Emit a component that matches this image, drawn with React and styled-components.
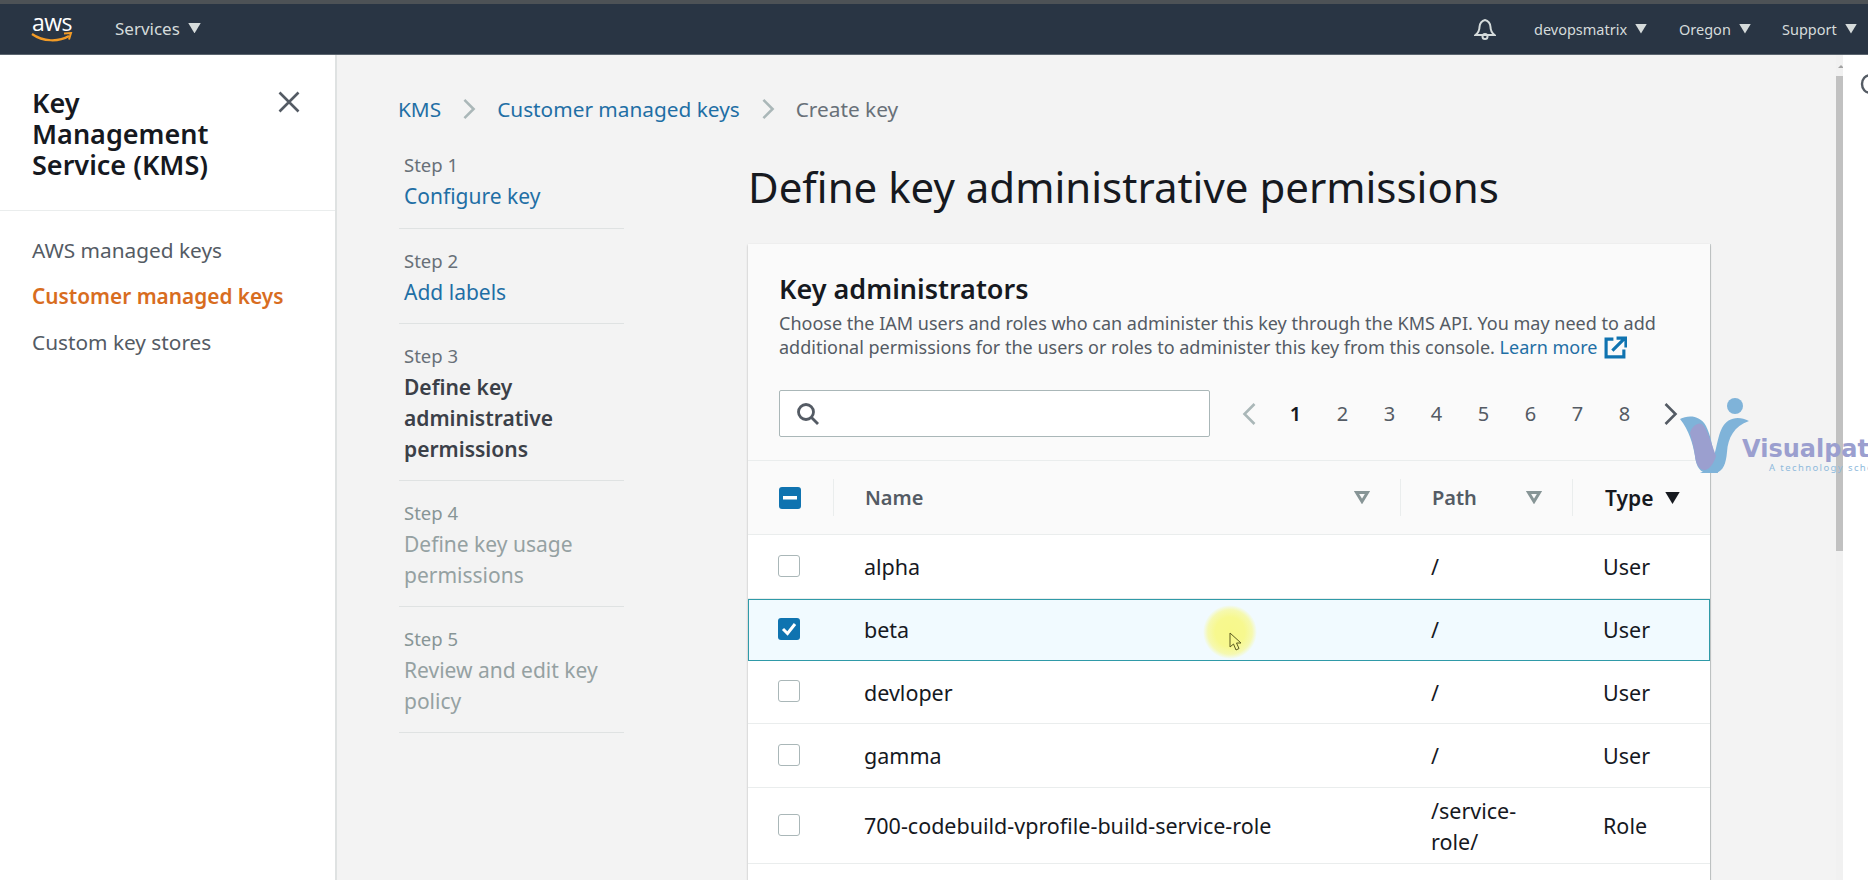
import React from "react";
import styled, { createGlobalStyle } from "styled-components";

const GlobalStyle = createGlobalStyle`
  html, body {
    margin: 0;
    height: 100%;
    overflow: hidden;
    background: #fff;
    font-family: "Noto Sans", "Liberation Sans", sans-serif;
    color: #16191f;
  }
  * { box-sizing: border-box; }
`;

const steps = [
  { label: "Step 1", title: ["Configure key"], state: "link" },
  { label: "Step 2", title: ["Add labels"], state: "link" },
  { label: "Step 3", title: ["Define key", "administrative", "permissions"], state: "current" },
  { label: "Step 4", title: ["Define key usage", "permissions"], state: "off" },
  { label: "Step 5", title: ["Review and edit key", "policy"], state: "off" },
];

const rows = [
  { name: "alpha", path: "/", type: "User", height: 64 },
  { name: "beta", path: "/", type: "User", height: 62, selected: true },
  { name: "devloper", path: "/", type: "User", height: 63 },
  { name: "gamma", path: "/", type: "User", height: 64 },
  { name: "700-codebuild-vprofile-build-service-role", path: "/service-role/", type: "Role", height: 76 },
];

const Caret = ({ size = 12, color = "#d5dbdb" }) => (
  <svg width={size} height={size * 0.8} viewBox="0 0 12 10">
    <path d="M0 0h12L6 10z" fill={color} />
  </svg>
);

const FilterIcon = () => (
  <svg width="16" height="13" viewBox="0 0 16 13">
    <path d="M2.500 1.500h11L8 10.500z" fill="none" stroke="#879596" strokeWidth="3" />
  </svg>
);

const Chevron = ({ dir = "right", color = "#545b64", w = 15, h = 24, sw = 2.6 }) => (
  <svg width={w} height={h} viewBox="0 0 14 24">
    <path
      d={dir === "right" ? "M2 2l10 10L2 22" : "M12 2L2 12l10 10"}
      fill="none"
      stroke={color}
      strokeWidth={sw}
    />
  </svg>
);

const App = () => (
  <Page>
    <GlobalStyle />
    <TopStrip />
    <Nav>
      <Logo>
        <LogoText>aws</LogoText>
        <svg width="42" height="11" viewBox="0 0 42 11">
          <path d="M1 2c11 8 27 8 37 2" fill="none" stroke="#f29b26" strokeWidth="2.2" />
          <path d="M33 1.500l7-.5-2 6.500" fill="none" stroke="#f29b26" strokeWidth="2" />
        </svg>
      </Logo>
      <NavItem>
        Services <Caret size={13} />
      </NavItem>
      <NavRight>
        <BellWrap>
          <svg width="22" height="22" viewBox="0 0 22 22" fill="none" stroke="#d5dbdb" strokeWidth="2">
            <path d="M1.500 17h19c-3-2.500-4-4.500-4-8 0-3.500-2.500-6.500-5.500-7-3 .5-5.500 3.500-5.500 7 0 3.500-1 5.500-4 8z" />
            <circle cx="11" cy="18.500" r="2.500" />
          </svg>
        </BellWrap>
        <SmallNavItem $width={145}>
          devopsmatrix <Caret />
        </SmallNavItem>
        <SmallNavItem $width={103}>
          Oregon <Caret />
        </SmallNavItem>
        <SmallNavItem $width={76}>
          Support <Caret />
        </SmallNavItem>
      </NavRight>
    </Nav>
    <Body>
      <Sidebar>
        <SideHead>
          <SideTitle>Key Management Service (KMS)</SideTitle>
          <CloseButton>
            <svg width="22" height="22" viewBox="0 0 22 22">
              <path d="M1.500 1.500l19 19M20.500 1.500l-19 19" stroke="#545b64" strokeWidth="2.600" />
            </svg>
          </CloseButton>
        </SideHead>
        <SideNav>
          <SideLink>AWS managed keys</SideLink>
          <SideLink $active>Customer managed keys</SideLink>
          <SideLink>Custom key stores</SideLink>
        </SideNav>
      </Sidebar>
      <Main>
        <Crumbs>
          <CrumbLink>KMS</CrumbLink>
          <Chevron color="#aab7b8" w={14} h={22} sw={2.8} />
          <CrumbLink>Customer managed keys</CrumbLink>
          <Chevron color="#aab7b8" w={14} h={22} sw={2.8} />
          <CrumbCurrent>Create key</CrumbCurrent>
        </Crumbs>
        <Wizard>
          <Steps>
            {steps.map((s) => (
              <Step key={s.label}>
                <StepLabel $off={s.state === "off"}>{s.label}</StepLabel>
                {s.title.map((line) => (
                  <StepTitle key={line} $state={s.state}>
                    {line}
                  </StepTitle>
                ))}
              </Step>
            ))}
          </Steps>
          <Content>
            <Heading>Define key administrative permissions</Heading>
            <Panel>
              <PanelHead>
                <PanelTitle>Key administrators</PanelTitle>
                <PanelText>
                  Choose the IAM users and roles who can administer this key through the KMS API. You may need to add
                  <br />
                  additional permissions for the users or roles to administer this key from this console.{" "}
                  <LearnMore>Learn more</LearnMore>
                  <ExternalIcon viewBox="0 0 22 22" width="23" height="23">
                    <path d="M9 3H2v17h17v-7" fill="none" stroke="#0f73b0" strokeWidth="3" />
                    <path d="M8 14L19 3M12 2h9v9" fill="none" stroke="#0f73b0" strokeWidth="3" />
                  </ExternalIcon>
                </PanelText>
                <Tools>
                  <SearchBox>
                    <svg width="24" height="24" viewBox="0 0 24 24" fill="none" stroke="#545b64" strokeWidth="2.800">
                      <circle cx="10" cy="10" r="7.500" />
                      <path d="M15.500 15.500L22 22" />
                    </svg>
                  </SearchBox>
                  <Pager>
                    <PagerArrow>
                      <Chevron dir="left" color="#aab7b8" />
                    </PagerArrow>
                    <PageNumbers>
                      {[1, 2, 3, 4, 5, 6, 7, 8].map((n) => (
                        <PageNumber key={n} $current={n === 1}>
                          {n}
                        </PageNumber>
                      ))}
                    </PageNumbers>
                    <PagerArrow>
                      <Chevron />
                    </PagerArrow>
                  </Pager>
                </Tools>
              </PanelHead>
              <HeadRow>
                <HeadCheck>
                  <CheckBox $on>
                    <svg width="14" height="4" viewBox="0 0 14 4">
                      <rect width="14" height="3.500" fill="#fff" />
                    </svg>
                  </CheckBox>
                </HeadCheck>
                <HeadCell>
                  Name
                  <FilterIcon />
                </HeadCell>
                <HeadCell>
                  Path
                  <FilterIcon />
                </HeadCell>
                <HeadCell $sorted>
                  Type
                  <Caret size={15} color="#16191f" />
                </HeadCell>
              </HeadRow>
              {rows.map((r) => (
                <Row key={r.name} $selected={r.selected} $height={r.height}>
                  <CheckCell>
                    <CheckBox $on={r.selected}>
                      {r.selected && (
                        <svg width="16" height="14" viewBox="0 0 16 14">
                          <path d="M2 7l4.500 4.500L14 2" fill="none" stroke="#fff" strokeWidth="3" />
                        </svg>
                      )}
                    </CheckBox>
                  </CheckCell>
                  <Cell>{r.name}</Cell>
                  <Cell>{r.path}</Cell>
                  <Cell>{r.type}</Cell>
                </Row>
              ))}
            </Panel>
          </Content>
        </Wizard>
      </Main>
      <ScrollTrack>
        <ScrollArrow />
        <ScrollThumb />
      </ScrollTrack>
      <RightEdge>
        <svg width="12" height="24" viewBox="0 0 12 24">
          <path d="M11 2C5 2 2 6.500 2 11s3 9 9 9" fill="none" stroke="#545b64" strokeWidth="2.400" />
        </svg>
      </RightEdge>
    </Body>
    <CursorHalo>
      <svg width="14" height="19" viewBox="0 0 14 19">
        <path d="M1 1v14l3.500-3 2.500 6 3-1.500-2.500-5.500H12z" fill="none" stroke="#5b5b20" strokeWidth="1" />
      </svg>
    </CursorHalo>
    <Watermark>
      <svg width="72" height="76" viewBox="0 0 72 76">
        <circle cx="55" cy="8" r="8" fill="#7fb3d9" />
        <path d="M0 21C8 17 20 17 26 28c5 10 6 20 9 32l3 15H26c-8-2-10-9-11-17C13 46 9 32 0 21z" fill="#7fb3d9" />
        <path d="M69 23C58 17 47 20 42 30c-4 8-5 18-8 28-3 10-8 15-14 17h16c7-2 10-9 11-21 1-14 7-26 22-31z" fill="#7fb3d9" />
        <path d="M10 35c2-7 8-11 12-9 5 4 9 18 14 32-2 7-6 13-11 14-6 0-9-6-10-14-1-8-3-16-5-23z" fill="#9b9fcf" />
      </svg>
      <WatermarkText>
        <WatermarkName>Visualpath</WatermarkName>
        <WatermarkTag>A technology school</WatermarkTag>
      </WatermarkText>
    </Watermark>
  </Page>
);

export default App;

const Page = styled.div`
  position: relative;
  width: 1868px;
  height: 880px;
  overflow: hidden;
  display: flex;
  flex-direction: column;
`;

const TopStrip = styled.div`
  height: 4px;
  background: #4d5256;
  flex: none;
`;

const Nav = styled.header`
  height: 51px;
  flex: none;
  display: flex;
  align-items: center;
  background: #293544;
  border-bottom: 1px solid #5b656f;
  color: #d5dbdb;
  padding: 0 10px 0 31px;
`;

const Logo = styled.div`
  width: 84px;
  display: flex;
  flex-direction: column;
  margin-top: -4px;
`;

const LogoText = styled.span`
  font-family: "Open Sans", sans-serif;
  font-size: 23px;
  line-height: 20px;
  color: #fff;
  letter-spacing: -0.5px;
  padding-left: 1px;
`;

const NavItem = styled.div`
  display: flex;
  align-items: center;
  gap: 8px;
  font-size: 17px;
  margin-top: -2px;
`;

const NavRight = styled.div`
  margin-left: auto;
  display: flex;
  align-items: center;
`;

const BellWrap = styled.div`
  width: 60px;
  display: flex;
  padding-bottom: 1px;
`;

const SmallNavItem = styled.div`
  width: ${(p) => p.$width}px;
  display: flex;
  align-items: center;
  gap: 8px;
  font-size: 14.5px;
`;

const Body = styled.div`
  flex: 1;
  min-height: 0;
  display: flex;
`;

const Sidebar = styled.aside`
  width: 337px;
  flex: none;
  background: #fff;
  border-right: 2px solid #dfe2e2;
`;

const SideHead = styled.div`
  height: 156px;
  padding: 32px 35px 0 32px;
  display: flex;
  justify-content: space-between;
  border-bottom: 1px solid #eaeded;
`;

const SideTitle = styled.h2`
  margin: 0;
  width: 225px;
  font-size: 27px;
  line-height: 31px;
  font-weight: 600;
`;

const CloseButton = styled.div`
  margin-top: 4px;
`;

const SideNav = styled.nav`
  padding-top: 16px;
  display: flex;
  flex-direction: column;
`;

const SideLink = styled.a`
  padding-left: 32px;
  height: 46px;
  line-height: 46px;
  font-size: 20.8px;
  font-weight: ${(p) => (p.$active ? 600 : 400)};
  color: ${(p) => (p.$active ? "#d86d1f" : "#545b64")};
`;

const Main = styled.main`
  flex: 1;
  min-width: 0;
  background: #f3f3f3;
  padding: 39px 125px 0 62px;
`;

const Crumbs = styled.div`
  display: flex;
  align-items: center;
  gap: 21px;
  height: 30px;
  margin-left: -1px;
  font-size: 20.8px;
`;

const CrumbLink = styled.a`
  color: #1f6fa5;
`;

const CrumbCurrent = styled.span`
  color: #687078;
`;

const Wizard = styled.div`
  display: flex;
  margin-top: 18px;
`;

const Steps = styled.ol`
  list-style: none;
  margin: 0 124px 0 0;
  padding: 0;
  width: 225px;
  flex: none;
`;

const Step = styled.li`
  padding: 16px 5px 15px 5px;
  border-bottom: 1px solid #dfe2e2;
  &:first-child {
    padding-top: 7px;
    padding-bottom: 16px;
  }
`;

const StepLabel = styled.div`
  font-size: 18.5px;
  line-height: 32px;
  color: ${(p) => (p.$off ? "#879596" : "#687078")};
`;

const StepTitle = styled.div`
  font-size: 21px;
  line-height: 31px;
  font-weight: ${(p) => (p.$state === "current" ? 600 : 400)};
  color: ${(p) =>
    p.$state === "link" ? "#1f6fa5" : p.$state === "current" ? "#3b4048" : "#95a1a2"};
`;

const Content = styled.div`
  flex: 1;
  min-width: 0;
`;

const Heading = styled.h1`
  margin: 0;
  height: 102px;
  font-size: 42px;
  line-height: 56px;
  font-weight: 400;
  padding-top: 17px;
  white-space: nowrap;
`;

const Panel = styled.section`
  width: 962px;
  min-height: 720px;
  background: #fff;
  box-shadow: 0 1px 2px rgba(0, 0, 0, 0.28), 1px 0 0 #d0d5d5;
`;

const PanelHead = styled.div`
  background: #fafafa;
  padding: 29px 31px 0;
  height: 217px;
  border-bottom: 1px solid #eaeded;
`;

const PanelTitle = styled.h2`
  margin: 0;
  font-size: 27px;
  line-height: 32px;
  font-weight: 600;
`;

const PanelText = styled.p`
  margin: 6px 0 0;
  font-size: 18px;
  line-height: 24px;
  color: #545b64;
  white-space: nowrap;
`;

const LearnMore = styled.a`
  color: #1f6fa5;
`;

const ExternalIcon = styled.svg`
  margin-left: 7px;
  vertical-align: -5px;
`;

const Tools = styled.div`
  display: flex;
  align-items: center;
  margin-top: 31px;
`;

const SearchBox = styled.div`
  width: 431px;
  height: 47px;
  flex: none;
  background: #fff;
  border: 1px solid #aab7b8;
  border-radius: 2px;
  padding-left: 16px;
  display: flex;
  align-items: center;
`;

const Pager = styled.div`
  margin-left: 30px;
  display: flex;
  flex: none;
  align-items: center;
`;

const PagerArrow = styled.div`
  width: 18px;
  display: flex;
  justify-content: center;
`;

const PageNumbers = styled.div`
  display: grid;
  grid-template-columns: repeat(8, 47px);
  margin: 0 13px 0 14px;
`;

const PageNumber = styled.span`
  text-align: center;
  font-size: 20px;
  font-weight: ${(p) => (p.$current ? 600 : 400)};
  color: ${(p) => (p.$current ? "#16191f" : "#545b64")};
`;

const tableColumns = "85px 567px 172px 1fr";

const HeadRow = styled.div`
  height: 74px;
  display: grid;
  grid-template-columns: ${tableColumns};
  align-items: center;
  background: #fafafa;
  border-bottom: 1px solid #eaeded;
`;

const HeadCheck = styled.div`
  height: 37px;
  padding-left: 31px;
  display: flex;
  align-items: center;
`;

const HeadCell = styled.div`
  height: 37px;
  padding: 0 30px 0 ${(p) => (p.$sorted ? 32 : 31)}px;
  border-left: 1px solid #eaeded;
  display: flex;
  align-items: center;
  justify-content: ${(p) => (p.$sorted ? "flex-start" : "space-between")};
  gap: 12px;
  font-size: ${(p) => (p.$sorted ? 21 : 20)}px;
  font-weight: 600;
  color: ${(p) => (p.$sorted ? "#16191f" : "#545b64")};
`;

const CheckBox = styled.span`
  width: 22px;
  height: 22px;
  border-radius: 3px;
  display: flex;
  align-items: center;
  justify-content: center;
  background: ${(p) => (p.$on ? "#0f73b0" : "#fff")};
  border: ${(p) => (p.$on ? "none" : "1.5px solid #aab7b8")};
`;

const Row = styled.div`
  height: ${(p) => p.$height}px;
  display: grid;
  grid-template-columns: ${tableColumns};
  align-items: center;
  background: ${(p) => (p.$selected ? "#f1faff" : "#fff")};
  border-bottom: 1px solid #eaeded;
  outline: ${(p) => (p.$selected ? "1px solid #2f9aa8" : "none")};
  outline-offset: -1px;
  position: relative;
`;

const CheckCell = styled.div`
  padding-left: 30px;
  margin-top: -2px;
`;

const Cell = styled.div`
  padding: 0 31px;
  font-size: 21.5px;
  line-height: 31px;
  color: #16191f;
`;

const ScrollTrack = styled.div`
  width: 7px;
  flex: none;
  background: #f1f1f1;
  display: flex;
  flex-direction: column;
`;

const ScrollArrow = styled.div`
  height: 21px;
  padding: 10px 0 0 2px;
  &::before {
    content: "";
    display: block;
    width: 0;
    height: 0;
    border-left: 3px solid transparent;
    border-right: 3px solid transparent;
    border-bottom: 3px solid #a3a3a3;
  }
`;

const ScrollThumb = styled.div`
  height: 475px;
  background: #c1c1c1;
`;

const RightEdge = styled.div`
  width: 25px;
  flex: none;
  background: #fff;
  padding: 18px 0 0 17px;
`;

const CursorHalo = styled.div`
  position: absolute;
  left: 1203px;
  top: 605px;
  width: 54px;
  height: 54px;
  border-radius: 50%;
  background: radial-gradient(circle closest-side, #f7f88a 0%, #f7f88f 55%, rgba(247, 248, 150, 0.75) 82%, rgba(247, 248, 160, 0) 100%);
  padding: 27px 0 0 26px;
`;

const Watermark = styled.div`
  position: absolute;
  left: 1680px;
  top: 398px;
  display: flex;
  align-items: flex-end;
  pointer-events: none;
`;

const WatermarkText = styled.div`
  margin-left: -10px;
  padding-bottom: 1px;
  white-space: nowrap;
`;

const WatermarkName = styled.div`
  font-family: "DejaVu Sans", sans-serif;
  font-size: 24px;
  line-height: 28px;
  font-weight: 700;
  color: #9b9fcf;
`;

const WatermarkTag = styled.div`
  font-size: 9.5px;
  line-height: 10px;
  letter-spacing: 1.4px;
  padding-left: 27px;
  color: #8fbadc;
`;
